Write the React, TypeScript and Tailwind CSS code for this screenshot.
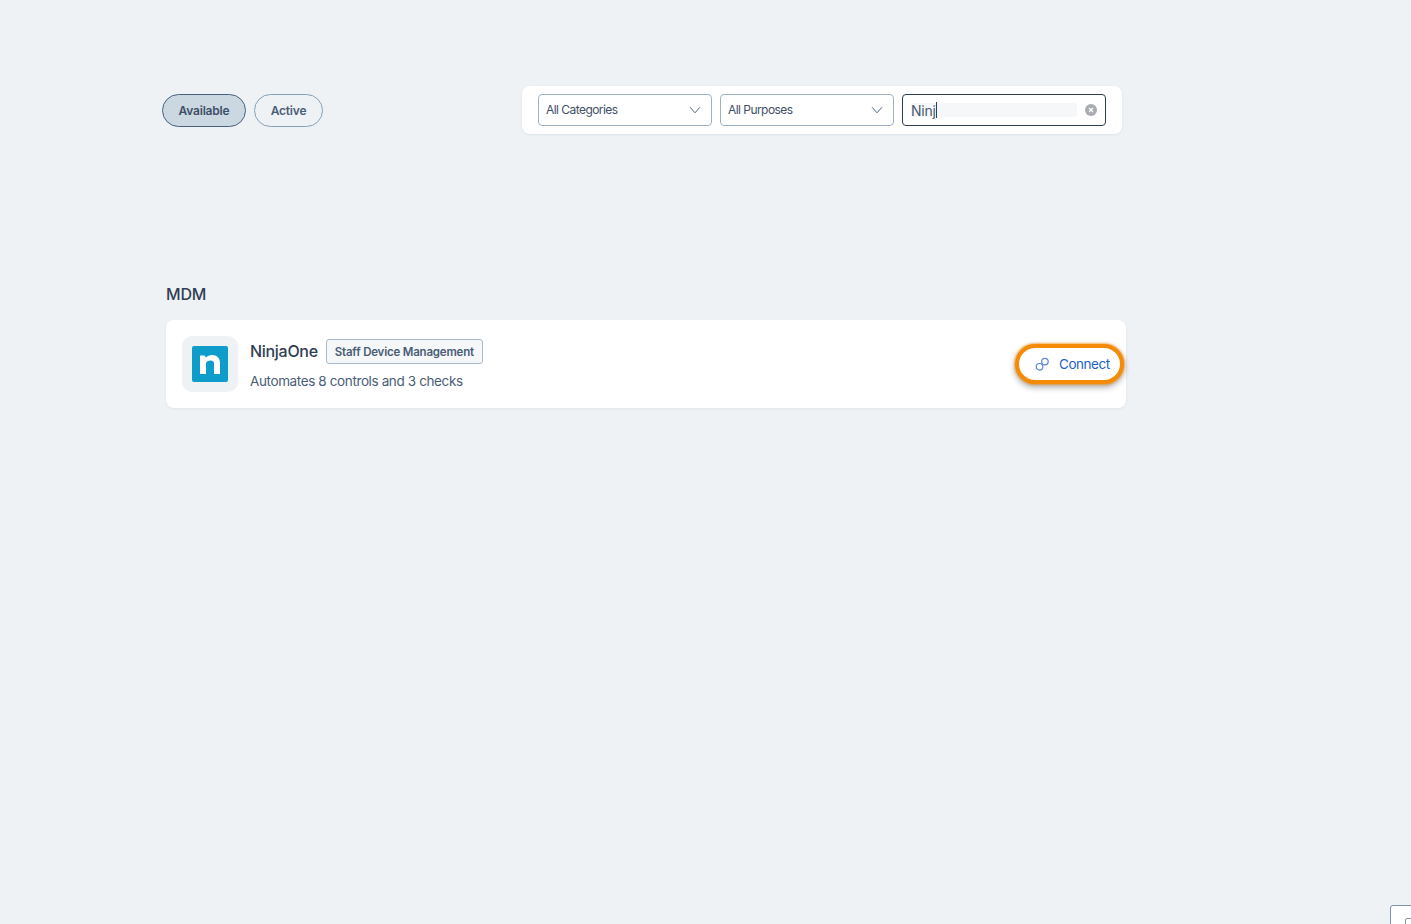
import React from "react";

const F = { fontFamily: '"Inter", "Liberation Sans", sans-serif' };

function Chevron() {
  return (
    <svg width="12" height="8" viewBox="0 0 12 8" fill="none" className="shrink-0">
      <path d="M1 1.2 6 6.8 11 1.2" stroke="#52667f" strokeWidth="1" />
    </svg>
  );
}

function Select({ label }: { label: string }) {
  return (
    <div className="flex h-8 w-[174px] items-center justify-between rounded-[4px] border border-[#9fb2c4] bg-white pl-[7px] pr-[10px]">
      <span className="text-[12px] tracking-[-0.55px] text-[#3f4f66]">{label}</span>
      <Chevron />
    </div>
  );
}

export default function App() {
  return (
    <div style={F} className="relative h-[924px] w-full overflow-hidden bg-[#eef2f5]">
      <div className="ml-[162px] flex w-[960px] items-start justify-between pt-[86px]">
        <div className="flex gap-2 pt-2">
          <div className="flex h-[33px] w-[84px] items-center justify-center rounded-full border border-[#466080] bg-[#ccd8e1] text-[12px] font-semibold tracking-[-0.2px] text-[#3d4f68]">
            Available
          </div>
          <div className="flex h-[33px] w-[69px] items-center justify-center rounded-full border border-[#86a0b8] text-[12px] font-semibold tracking-[-0.2px] text-[#4a5d76]">
            Active
          </div>
        </div>
        <div className="flex h-12 w-[600px] items-center gap-2 rounded-[8px] bg-white pl-4 shadow-[0_1px_3px_rgba(30,50,80,0.07)]">
          <Select label="All Categories" />
          <Select label="All Purposes" />
          <div className="flex h-8 w-[204px] items-center rounded-[4px] border border-[#2d3e55] bg-white pl-2 pr-[8px]">
            <div className="flex h-[14px] w-[166px] items-center rounded-[3px] bg-[#f5f7f9]">
              <span className="text-[14px] tracking-[-0.2px] text-[#4a5b73]">Ninj</span>
              <span className="h-4 w-px bg-[#2d3e55]" />
            </div>
            <svg width="12" height="12" viewBox="0 0 12 12" className="ml-auto">
              <circle cx="6" cy="6" r="6" fill="#a9adb2" />
              <path d="M4 4 8 8M8 4 4 8" stroke="#fff" strokeWidth="1.2" />
            </svg>
          </div>
        </div>
      </div>

      <h2 className="ml-[166px] mt-[149px] text-[16px] font-medium leading-[22px] tracking-[-0.2px] text-[#2f3e54]">
        MDM
      </h2>

      <div className="ml-[166px] mt-[15px] flex h-[88px] w-[960px] items-center rounded-[8px] bg-white pl-4 shadow-[0_1px_3px_rgba(30,50,80,0.07)]">
        <div className="flex h-14 w-14 items-center justify-center rounded-[10px] bg-[#eef2f5]">
          <div className="flex h-9 w-9 items-center justify-center rounded-[2px] bg-[#0e9ccb]">
            <svg width="20" height="20" viewBox="0 0 20 20">
              <path d="M0 20V1.5h4.5L6 3.6C7.4 2 9.4 1 12 1c5 0 8 3.2 8 8v11h-6V9.6c0-2-1-3.1-3.4-3.1S6 7.6 6 9.6V20Z" fill="#fff" />
            </svg>
          </div>
        </div>
        <div className="ml-3 flex h-14 flex-col pt-[3px]">
          <div className="flex h-[25px] items-center gap-2">
            <span className="pb-[2px] text-[16px] font-medium leading-[20px] tracking-[-0.3px] text-[#2f3e54]">NinjaOne</span>
            <span className="flex h-[25px] items-center rounded-[3px] border border-[#a9bbcb] bg-[#f5f7f9] px-2 pt-[3px] text-[11.5px] font-semibold tracking-[-0.2px] text-[#4a5d76]">
              Staff Device Management
            </span>
          </div>
          <div className="mt-[7px] text-[13.5px] leading-[20px] tracking-[-0.38px] text-[#4a5d76]">
            Automates 8 controls and 3 checks
          </div>
        </div>
        <div className="relative ml-auto mr-[2px] flex h-[40px] w-[109px] items-center rounded-full border-[4px] border-[#f58a07] bg-white pl-[16px] shadow-[0_0_2px_1px_rgba(245,138,7,0.6),0_3px_6px_rgba(60,60,60,0.45)]">
          <svg width="15" height="15" viewBox="0 0 15 15" fill="none" stroke="#5b86d8" strokeWidth="1.2">
            <circle cx="4.5" cy="9.8" r="3.3" />
            <circle cx="9.9" cy="4.6" r="3.3" />
          </svg>
          <span className="ml-[9px] text-[13.5px] tracking-[-0.45px] text-[#1f5fc9]">Connect</span>
        </div>
      </div>

      <div className="absolute left-[1390px] top-[905px] h-8 w-8 rounded-tl-[3px] border border-[#7f93a8] bg-white">
        <div className="ml-[14px] mt-[12px] h-4 w-4 rounded-tl-[2px] border border-[#7f93a8]" />
      </div>
    </div>
  );
}
